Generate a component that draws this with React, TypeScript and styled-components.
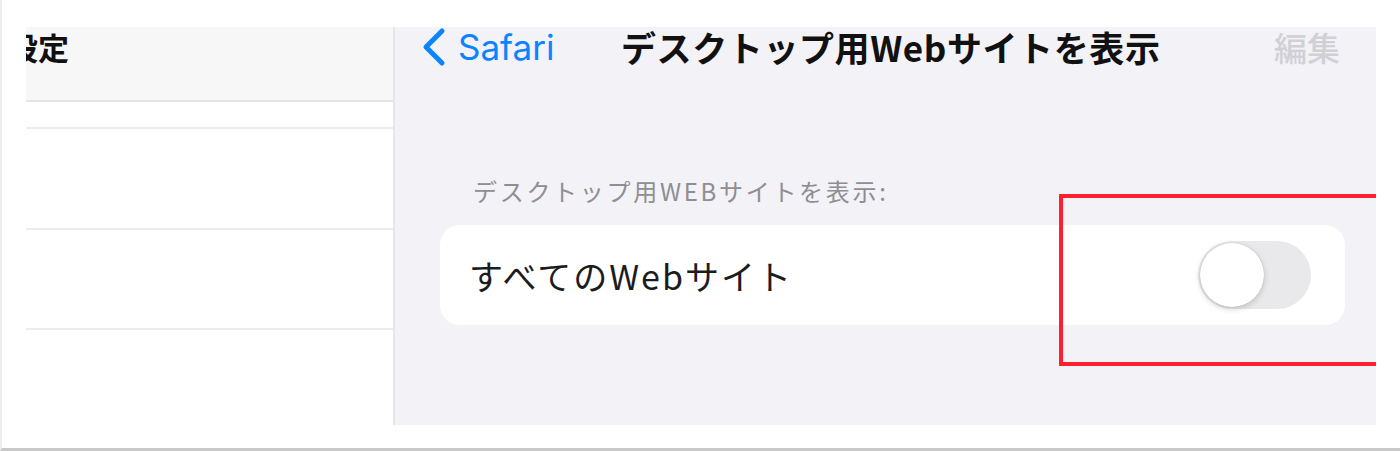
import * as React from "react"
import styled, { createGlobalStyle } from "styled-components"

const GlobalStyle = createGlobalStyle`
  html, body {
    margin: 0;
    padding: 0;
    background: #ffffff;
  }
  body {
    font-family: "Inter", "Noto Sans CJK JP", sans-serif;
  }
`

const Page = styled.div`
  box-sizing: border-box;
  width: 1400px;
  height: 451px;
  padding: 27px 24px 0 24px;
  background: #ffffff;
  border-left: 2px solid #eeeeee;
  border-bottom: 3px solid #c9c9c9;
`

const Screen = styled.div`
  display: flex;
  height: 398px;
`

const Sidebar = styled.div`
  width: 367px;
  flex: none;
  display: flex;
  flex-direction: column;
  overflow: hidden;
  background: #ffffff;
  border-right: 2px solid #e6e6e8;
`

const SidebarHeader = styled.div`
  height: 73px;
  flex: none;
  display: flex;
  align-items: flex-start;
  background: #f7f7f8;
  border-bottom: 2px solid #e4e4e6;
`

const SidebarTitle = styled.div`
  margin-left: -19px;
  font-family: "Noto Sans CJK JP", sans-serif;
  font-size: 31px;
  line-height: 40px;
  font-weight: 700;
  color: #111111;
  white-space: nowrap;
`

const SidebarRow = styled.div<{ $h: number }>`
  height: ${(p) => p.$h}px;
  flex: none;
  border-bottom: 2px solid #ececee;
`

const Detail = styled.div`
  flex: 1;
  position: relative;
  display: flex;
  flex-direction: column;
  background: #f3f2f7;
`

const NavBar = styled.div`
  height: 56px;
  flex: none;
  display: flex;
  align-items: flex-start;
  padding: 0 36px 0 25px;
  line-height: 40px;
`

const BackButton = styled.div`
  display: flex;
  align-items: center;
  gap: 10px;
  height: 40px;
  color: #0a84ff;
  font-size: 35px;
  font-weight: 400;
  width: 201px;
`

const NavTitle = styled.div`
  flex: 1;
  font-family: "Noto Sans CJK JP", sans-serif;
  font-size: 35px;
  font-weight: 700;
  letter-spacing: 0.6px;
  color: #111111;
  white-space: nowrap;
`

const EditButton = styled.div`
  font-family: "Noto Sans CJK JP", sans-serif;
  font-size: 33px;
  font-weight: 500;
  color: #d1d1d5;
`

const SectionHeader = styled.div`
  margin: 90px 0 0 78px;
  font-family: "Noto Sans CJK JP", sans-serif;
  font-size: 24px;
  letter-spacing: 2.7px;
  color: #8e8e93;
  white-space: nowrap;
`

const Card = styled.div`
  margin: 17px 31px 0 45px;
  height: 100px;
  display: flex;
  align-items: center;
  justify-content: space-between;
  padding: 0 34px 0 29px;
  background: #ffffff;
  border-radius: 20px;
`

const CardLabel = styled.div`
  font-family: "Noto Sans CJK JP", sans-serif;
  font-size: 34px;
  letter-spacing: 2px;
  color: #1c1c1e;
  white-space: nowrap;
`

const Toggle = styled.div`
  width: 113px;
  height: 68px;
  border-radius: 34px;
  background: #e9e9eb;
  display: flex;
  align-items: center;
  padding: 2px;
  box-sizing: border-box;
`

const Knob = styled.div`
  width: 64px;
  height: 64px;
  border-radius: 50%;
  background: #ffffff;
  box-shadow: 0 2px 6px rgba(0, 0, 0, 0.18), 0 0 1px rgba(0, 0, 0, 0.2);
`

const Highlight = styled.div`
  position: absolute;
  left: 664px;
  top: 167px;
  right: 0;
  height: 172px;
  box-sizing: border-box;
  border: 4px solid #ff1f2e;
  border-right: none;
  pointer-events: none;
`

const Chevron = () => (
  <svg width="28" height="40" viewBox="0 0 28 40">
    <path d="M22 4 L6 20 L22 36" fill="none" stroke="#0a84ff" strokeWidth="5" strokeLinecap="round" strokeLinejoin="round" />
  </svg>
)

const App = (): React.ReactElement => {
  return (
    <>
      <GlobalStyle />
      <Page>
        <Screen>
          <Sidebar>
            <SidebarHeader>
              <SidebarTitle>設定</SidebarTitle>
            </SidebarHeader>
            <SidebarRow $h={25} />
            <SidebarRow $h={99} />
            <SidebarRow $h={98} />
          </Sidebar>
          <Detail>
            <NavBar>
              <BackButton>
                <Chevron />
                <span>Safari</span>
              </BackButton>
              <NavTitle>デスクトップ用Webサイトを表示</NavTitle>
              <EditButton>編集</EditButton>
            </NavBar>
            <SectionHeader>デスクトップ用WEBサイトを表示:</SectionHeader>
            <Card>
              <CardLabel>すべてのWebサイト</CardLabel>
              <Toggle>
                <Knob />
              </Toggle>
            </Card>
            <Highlight />
          </Detail>
        </Screen>
      </Page>
    </>
  )
}

export default App
